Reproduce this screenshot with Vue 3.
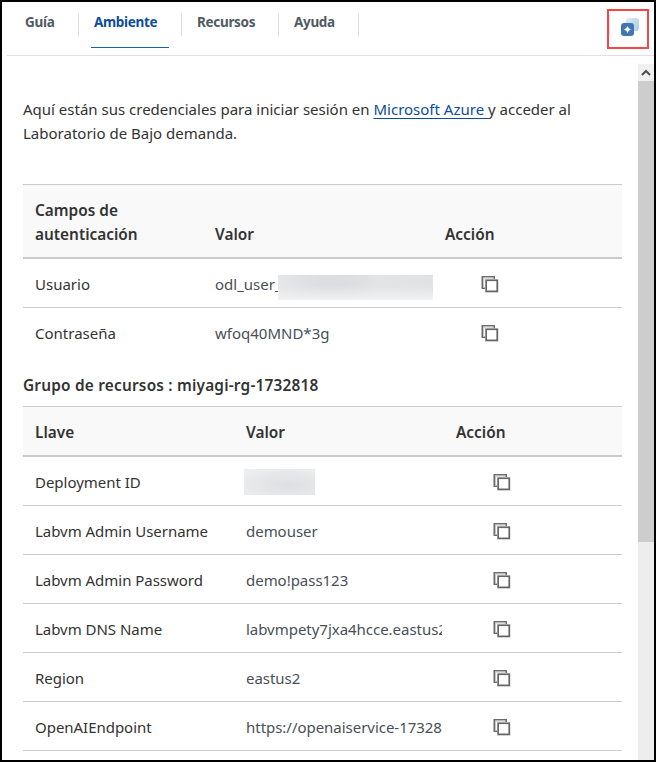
<script setup>
const tabs = [
  { id: 'guide', label: 'Guía' },
  { id: 'environment', label: 'Ambiente', active: true },
  { id: 'resources', label: 'Recursos' },
  { id: 'help', label: 'Ayuda' },
]
const tables = [
  {
    id: 'auth',
    heads: ['Campos de autenticación', 'Valor', 'Acción'],
    rows: [
      { key: 'Usuario', value: 'odl_user_', mask: 'wide' },
      { key: 'Contraseña', value: 'wfoq40MND*3g' },
    ],
  },
  {
    id: 'group',
    title: 'Grupo de recursos : miyagi-rg-1732818',
    heads: ['Llave', 'Valor', 'Acción'],
    rows: [
      { key: 'Deployment ID', value: '', mask: 'short' },
      { key: 'Labvm Admin Username', value: 'demouser' },
      { key: 'Labvm Admin Password', value: 'demo!pass123' },
      { key: 'Labvm DNS Name', value: 'labvmpety7jxa4hcce.eastus2' },
      { key: 'Region', value: 'eastus2' },
      { key: 'OpenAIEndpoint', value: 'https://openaiservice-17328' },
    ],
  },
]
</script>

<template>
  <div class="shell">
    <header class="topbar">
      <nav class="tabs">
        <div v-for="tab in tabs" :key="tab.id" class="tab" :class="[tab.id, { active: tab.active }]">
          <span>{{ tab.label }}</span>
        </div>
      </nav>
      <button class="split" aria-label="Dividir ventana">
        <svg width="18" height="18" viewBox="0 0 18 18">
          <defs>
            <linearGradient id="back" x1="0" y1="0" x2="1" y2="1">
              <stop offset="0" stop-color="#dcebf5" />
              <stop offset="1" stop-color="#aacbe3" />
            </linearGradient>
          </defs>
          <rect x="5" y="0" width="13" height="13" rx="3" fill="url(#back)" />
          <rect x="0" y="5" width="13" height="13" rx="3" fill="#3f77b5" />
          <path d="M6.5 8L7.8 10.2L10 11.5L7.8 12.8L6.5 15L5.2 12.8L3 11.5L5.2 10.2Z" fill="#fff" />
        </svg>
      </button>
    </header>
    <div class="body">
      <main class="content">
        <p class="intro">
          <span>Aquí están sus credenciales para iniciar sesión en <a>Microsoft Azure </a>y acceder al</span>
          <span>Laboratorio de Bajo demanda.</span>
        </p>
        <section v-for="table in tables" :key="table.id" :class="table.id">
          <h2 v-if="table.title">{{ table.title }}</h2>
          <div class="row head">
            <div v-for="h in table.heads" :key="h" class="cell">{{ h }}</div>
          </div>
          <div v-for="row in table.rows" :key="row.key" class="row">
            <div class="cell">{{ row.key }}</div>
            <div class="cell value">
              <span>{{ row.value }}</span><i v-if="row.mask" class="mask" :class="row.mask"></i>
            </div>
            <div class="cell action">
              <svg width="18" height="17" viewBox="0 0 18 17" fill="none">
                <path d="M13.2 3V0.8H1.3V12.2H4" stroke="#6b6b6b" stroke-width="1.6" />
                <path d="M2.6 11.5V2.1H12.5" stroke="#c4c4c4" stroke-width="1" />
                <rect x="4" y="3.2" width="13.6" height="13.6" fill="#d4d4d4" />
                <rect x="5.2" y="4.3" width="11" height="11" fill="#fff" stroke="#666" stroke-width="1.6" />
              </svg>
            </div>
          </div>
        </section>
      </main>
      <aside class="scrollbar">
        <div class="up">
          <svg width="10" height="8" viewBox="0 0 10 8"><path d="M1 6L5 2L9 6" fill="none" stroke="#505050" stroke-width="2" /></svg>
        </div>
        <div class="thumb"></div>
      </aside>
    </div>
  </div>
</template>

<style>
body { margin: 0; background: #fff; }
</style>

<style scoped>
.shell {
  box-sizing: border-box;
  width: 656px;
  height: 762px;
  border: 2px solid #000;
  background: #fff;
  overflow: hidden;
  color: #333;
  font-family: "Noto Sans", "Open Sans", sans-serif;
  font-size: 15px;
  line-height: 24px;
}
.topbar {
  box-sizing: border-box;
  height: 54px;
  margin-left: 5px;
  border-bottom: 1px solid #dee0e3;
  display: flex;
  justify-content: space-between;
  align-items: flex-start;
}
.tabs { display: flex; }
.tab {
  box-sizing: border-box;
  height: 46px;
  padding-top: 8px;
  font-size: 13.5px;
  font-weight: 700;
  letter-spacing: -0.32px;
  color: #505a63;
  white-space: nowrap;
  background: linear-gradient(#dcdee3, #dcdee3) right 11px / 1px 23px no-repeat;
}
.guide { width: 72px; padding-left: 18px; }
.environment { width: 103px; padding-left: 15px; }
.resources { width: 97px; padding-left: 15px; }
.help { width: 80px; padding-left: 15px; }
.active { color: #0e4d98; }
.active::after {
  content: "";
  display: block;
  width: 78px;
  height: 1px;
  margin: 13px 0 0 -3px;
  background: #1263ae;
}
.split {
  box-sizing: border-box;
  display: flex;
  align-items: flex-start;
  width: 42px;
  height: 40px;
  margin: 7px 5px 0 0;
  padding: 7px 0 0 12px;
  border: 2px solid #f34747;
  background: linear-gradient(#dcdee3, #dcdee3) 0 4px / 1px 20px no-repeat;
}
.body { display: flex; height: 704px; }
.content {
  box-sizing: border-box;
  width: 620px;
  padding: 41px 0 0 21px;
  flex: none;
}
.intro { margin: 0 0 39px; height: 48px; white-space: nowrap; }
.intro span { display: block; }
.intro a { color: #0e4d98; text-decoration: underline; text-underline-offset: 3px; text-decoration-thickness: 1px; white-space: pre; }
h2 { margin: 0; height: 49px; padding-top: 17px; box-sizing: border-box; font-size: 15.4px; font-weight: 600; line-height: 24px; letter-spacing: 0.2px; }
.row {
  box-sizing: border-box;
  display: grid;
  width: 599px;
  height: 49px;
  border-bottom: 1px solid #ccc;
  padding: 2px 0 0 12px;
  align-items: center;
}
.auth .row { grid-template-columns: 180px 230px 1fr; }
.group .row { grid-template-columns: 211px 210px 1fr; letter-spacing: -0.03px; }
.auth .row:last-child { border-bottom-color: transparent; }
.head.row {
  height: 51px;
  border-top: 1px solid #ccc;
  border-bottom: 2px solid #cdc8ca;
  background: #f9f9f9;
  font-size: 15.4px;
  font-weight: 600;
  letter-spacing: 0;
  align-items: end;
  padding-bottom: 10px;
}
.auth .head.row { height: 75px; }
.auth .head .cell:first-child { width: 120px; }
.value { display: flex; align-items: center; color: #494f57; overflow: hidden; white-space: nowrap; }
.group .value { width: 196px; }
.mask { display: block; height: 25px; flex: none; }
.wide {
  width: 155px;
  margin: 6px 0 0 -4px;
  background:
    linear-gradient(transparent 45%, #f2f2f3),
    linear-gradient(90deg, #e5e6e8, #dcdde0 30%, #dcdee0 45%, #e3e4e6 65%, #e1e2e4);
}
.auth .value { height: 31px; }
.short {
  width: 71px;
  height: 26px;
  background: radial-gradient(ellipse at 62% 60%, #dedfe2, #e5e6e8 45%, #f0f0f1 100%);
}
.group .value:has(.short) { margin-left: -2px; }
.action { line-height: 0; }
.action svg { margin-left: 36px; }
.group .action svg { margin-left: 37px; }
.scrollbar { width: 16px; height: 696px; margin: 8px 0 0 16px; background: #ededed; }
.up { height: 17px; display: flex; align-items: center; justify-content: center; background: #f0f0f0; }
.thumb { height: 461px; background: #cdcdcd; }
</style>
